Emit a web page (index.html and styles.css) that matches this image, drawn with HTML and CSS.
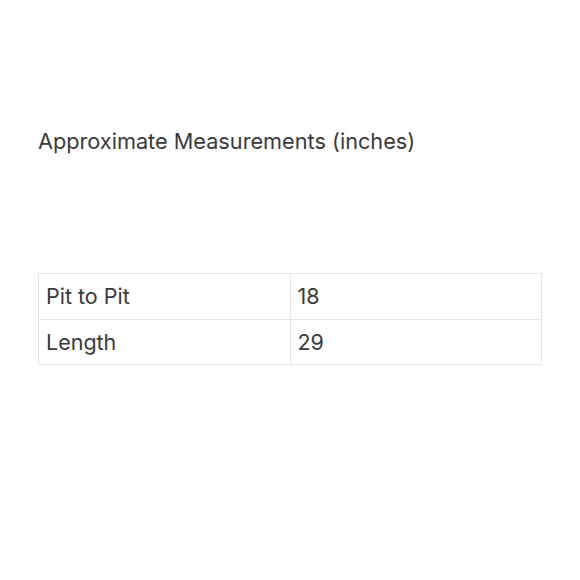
FILE: index.html
```html
<!DOCTYPE html>
<html>
<head>
<meta charset="utf-8">
<link rel="stylesheet" href="styles.css">
</head>
<body>
<div class="page">
  <h1 class="title">Approximate Measurements (inches)</h1>
  <table class="measure">
    <tr><td>Pit to Pit</td><td>18</td></tr>
    <tr><td>Length</td><td>29</td></tr>
  </table>
</div>
</body>
</html>
```
FILE: styles.css
```css
html, body {
  margin: 0;
  padding: 0;
  background: #fff;
}
.page {
  padding: 125px 38px 0 38px;
  font-family: Inter, "Noto Sans", sans-serif;
  color: #3a3a3a;
}
.title {
  margin: 0;
  font-size: 21.7px;
  font-weight: 400;
  line-height: 32px;
}
.measure {
  margin-top: 116px;
  width: 504px;
  border-collapse: collapse;
  font-size: 21.5px;
}
.measure td {
  width: 50%;
  border: 1px solid #e6e6e6;
  height: 45.5px;
  padding: 0 7px;
  box-sizing: border-box;
}
```
